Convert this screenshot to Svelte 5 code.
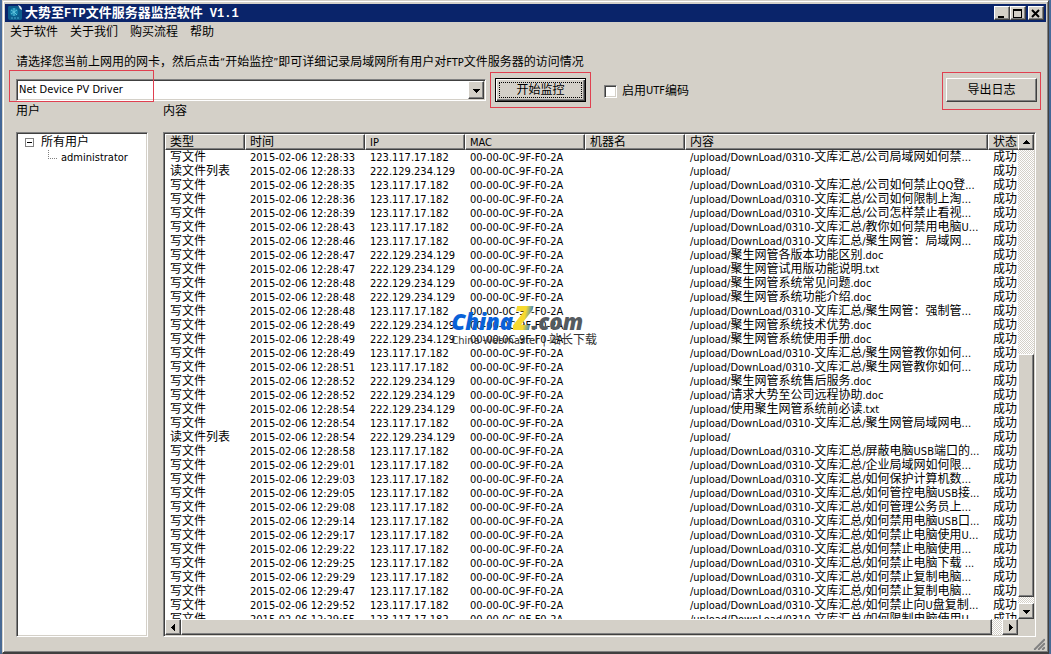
<script>
    let device = $state('Net Device PV Driver');
    let useUtf = $state(false);

    const menus = ['关于软件', '关于我们', '购买流程', '帮助'];
    const headers = ['类型', '时间', 'IP', 'MAC', '机器名', '内容', '状态'];
    const mac = '00-00-0C-9F-F0-2A';
    const inside = '123.117.17.182';
    const outside = '222.129.234.129';
    const folder = '/upload/DownLoad/0310-文库汇总/';

    // [time, ip, path]
    const log = [
        ['12:28:33', inside, folder + '公司局域网如何禁...'],
        ['12:28:33', outside, '/upload/'],
        ['12:28:35', inside, folder + '公司如何禁止QQ登...'],
        ['12:28:36', inside, folder + '公司如何限制上淘...'],
        ['12:28:39', inside, folder + '公司怎样禁止看视...'],
        ['12:28:43', inside, folder + '教你如何禁用电脑U...'],
        ['12:28:46', inside, folder + '聚生网管：局域网...'],
        ['12:28:47', outside, '/upload/聚生网管各版本功能区别.doc'],
        ['12:28:47', outside, '/upload/聚生网管试用版功能说明.txt'],
        ['12:28:48', outside, '/upload/聚生网管系统常见问题.doc'],
        ['12:28:48', outside, '/upload/聚生网管系统功能介绍.doc'],
        ['12:28:48', inside, folder + '聚生网管：强制管...'],
        ['12:28:49', outside, '/upload/聚生网管系统技术优势.doc'],
        ['12:28:49', outside, '/upload/聚生网管系统使用手册.doc'],
        ['12:28:49', inside, folder + '聚生网管教你如何...'],
        ['12:28:51', inside, folder + '聚生网管教你如何...'],
        ['12:28:52', outside, '/upload/聚生网管系统售后服务.doc'],
        ['12:28:52', outside, '/upload/请求大势至公司远程协助.doc'],
        ['12:28:54', outside, '/upload/使用聚生网管系统前必读.txt'],
        ['12:28:54', inside, folder + '聚生网管局域网电...'],
        ['12:28:54', outside, '/upload/'],
        ['12:28:58', inside, folder + '屏蔽电脑USB端口的...'],
        ['12:29:01', inside, folder + '企业局域网如何限...'],
        ['12:29:03', inside, folder + '如何保护计算机数...'],
        ['12:29:05', inside, folder + '如何管控电脑USB接...'],
        ['12:29:08', inside, folder + '如何管理公务员上...'],
        ['12:29:14', inside, folder + '如何禁用电脑USB口...'],
        ['12:29:17', inside, folder + '如何禁止电脑使用U...'],
        ['12:29:22', inside, folder + '如何禁止电脑使用...'],
        ['12:29:25', inside, folder + '如何禁止电脑下载 ...'],
        ['12:29:29', inside, folder + '如何禁止复制电脑...'],
        ['12:29:47', inside, folder + '如何禁止复制电脑...'],
        ['12:29:52', inside, folder + '如何禁止向U盘复制...'],
        ['12:29:55', inside, folder + '如何限制电脑使用U...'],
    ];

    // latin runs are set one size smaller than the chinese text
    function runs(text) {
        return text.match(/[\x20-\x7e“”]+|[^\x20-\x7e“”]+/g) ?? [];
    }
    function isLatin(run) {
        return /^[\x20-\x7e“”]/.test(run);
    }
</script>

{#snippet mixed(text)}{#each runs(text) as run}{#if isLatin(run)}<span class="latin">{run}</span>{:else}{run}{/if}{/each}{/snippet}

{#snippet arrow(points)}<svg width="7" height="7" viewBox="0 0 7 7" shape-rendering="crispEdges"><polygon {points} fill="#000" /></svg>{/snippet}

<div class="window">
    <header class="title-bar">
        <svg class="app-icon" width="16" height="16" viewBox="0 0 16 16">
            <path d="M2 1h9l4 4v8q0 2-2 2H3q-2 0-2-2V3q0-2 1-2z" fill="#0c5d8c" />
            <path d="M11 0q4 1 4 5l-2-1q-1-2-2-4z" fill="#e8f4fa" />
            <circle cx="7" cy="7" r="4" fill="#1583ad" />
            <path d="M4 5l3 2 3-2M4 9l3-2 3 3M7 3v8" stroke="#5ec3dc" fill="none" />
            <path d="M4 13h2M7 13h2M10 13h2" stroke="#49aed0" />
        </svg>
        <h1>大势至<span class="mono">FTP</span>文件服务器监控软件<span class="mono">{' V1.1'}</span></h1>
        <div class="window-buttons">
            <button aria-label="最小化"><svg width="10" height="9" shape-rendering="crispEdges"><path d="M1 7h6v2H1z" /></svg></button>
            <button aria-label="最大化"><svg width="10" height="9" shape-rendering="crispEdges"><path d="M0 0h9v9H0zM1 2v6h7V2z" fill-rule="evenodd" /></svg></button>
            <button class="close" aria-label="关闭"><svg width="10" height="9"><path d="M1 1l7 7M8 1L1 8" stroke="#000" stroke-width="2" /></svg></button>
        </div>
    </header>

    <nav class="menu">
        {#each menus as item}
            <button>{item}</button>
        {/each}
    </nav>

    <main>
        <label class="prompt" for="device">{@render mixed('请选择您当前上网用的网卡，然后点击“开始监控”即可详细记录局域网所有用户对FTP文件服务器的访问情况')}</label>

        <div class="toolbar">
            <div class="combo">
                <select id="device" bind:value={device}>
                    <option>Net Device PV Driver</option>
                </select>
                <span class="combo-arrow">{@render arrow('0,2 7,2 3.5,6')}</span>
                <span class="mark combo-mark"></span>
            </div>
            <div class="mark start-mark">
                <button class="push default"><span>开始监控</span></button>
            </div>
            <label class="check"><input type="checkbox" bind:checked={useUtf} />{@render mixed('启用UTF编码')}</label>
            <div class="mark export-mark">
                <button class="push">导出日志</button>
            </div>
        </div>

        <div class="panels">
            <section class="users">
                <h2>用户</h2>
                <div class="tree sunken">
                    <ul>
                        <li>
                            <button class="toggle" aria-label="折叠"></button>所有用户
                            <ul class="children">
                                <li>{@render mixed('administrator')}</li>
                            </ul>
                        </li>
                    </ul>
                </div>
            </section>

            <section class="content">
                <h2>内容</h2>
                <div class="list sunken">
                    <div class="rows">
                        <table>
                            <colgroup>
                                <col class="w80" /><col class="w120" /><col class="w100" /><col class="w120" /><col class="w100" /><col /><col class="w30" />
                            </colgroup>
                            <thead>
                                <tr>
                                    {#each headers as h}
                                        <th>{@render mixed(h)}</th>
                                    {/each}
                                </tr>
                            </thead>
                            <tbody>
                                {#each log as [time, ip, path]}
                                    <tr>
                                        <td>{path === '/upload/' ? '读文件列表' : '写文件'}</td>
                                        <td>{@render mixed('2015-02-06 ' + time)}</td>
                                        <td>{@render mixed(ip)}</td>
                                        <td>{@render mixed(mac)}</td>
                                        <td></td>
                                        <td>{@render mixed(path)}</td>
                                        <td>成功</td>
                                    </tr>
                                {/each}
                            </tbody>
                        </table>
                    </div>
                    <div class="scroll vertical">
                        <button aria-label="向上">{@render arrow('0,5 7,5 3.5,1')}</button>
                        <div class="before"></div>
                        <div class="thumb"></div>
                        <div class="after"></div>
                        <button aria-label="向下">{@render arrow('0,2 7,2 3.5,6')}</button>
                    </div>
                    <div class="scroll horizontal">
                        <button aria-label="向左">{@render arrow('5,0 5,7 1,3.5')}</button>
                        <div class="thumb"></div>
                        <div class="after"></div>
                        <button aria-label="向右">{@render arrow('2,0 2,7 6,3.5')}</button>
                    </div>
                    <div class="corner"></div>

                    <div class="watermark">
                        <div class="brand">China<span class="zed">Z</span><span class="com">.com</span></div>
                        <div class="slogan">{@render mixed('China Webmaster | 站长下载')}</div>
                    </div>
                </div>
            </section>
        </div>
    </main>

    <footer>
        <svg width="13" height="13" viewBox="0 0 13 13">
            <path d="M1 13L13 1M5 13l8-8M9 13l4-4" stroke="#fff" />
            <path d="M2 13L13 2M6 13l7-7M10 13l3-3" stroke="#808080" stroke-width="2" />
        </svg>
    </footer>
</div>

<style>
    :global(body){
        margin: 0;
        background: linear-gradient(#4a6c9c, #3a5f8f 40%, #496a94);
    }
    .window{
        box-sizing: border-box;
        height: 100vh;
        margin: 0 2px;
        padding: 1px 1px 0;
        display: flex;
        flex-direction: column;
        background-color: #d4d0c8;
        border: 1px solid #d4d0c8;
        border-right-color: #404040;
        border-bottom: 2px solid #404040;
        box-shadow: inset 1px 1px #fff, inset -1px -1px #808080;
        color: #000;
        font-family: "DejaVu Sans Condensed", "Noto Sans CJK SC", sans-serif;
        font-size: 12px;
        line-height: 14px;
    }
    .latin{
        font-size: 11px;
        line-height: 10px;
    }
    button, select{
        font: inherit;
        color: inherit;
        padding: 0;
        margin: 0;
        border: 0;
        border-radius: 0;
        background: none;
    }
    h1, h2, ul{
        margin: 0;
        padding: 0;
        font-size: 12px;
        font-weight: normal;
        list-style: none;
    }

    .title-bar{
        display: flex;
        align-items: center;
        height: 18px;
        margin: 2px 1px 0;
        padding: 0 2px;
        background-color: #0a246a;
        color: #fff;
    }
    .title-bar h1{
        flex: 1;
        margin-left: 2px;
        font-size: 13px;
        font-weight: bold;
        white-space: pre;
    }
    .mono{
        font-family: "Liberation Mono", monospace;
        font-size: 12px;
    }
    .window-buttons{
        display: flex;
    }
    .window-buttons button{
        width: 16px;
        height: 14px;
        display: flex;
        align-items: center;
        justify-content: center;
    }
    .window-buttons .close{
        margin-left: 2px;
    }
    .window-buttons button, .scroll button, .thumb, .combo-arrow{
        box-sizing: border-box;
        background-color: #d4d0c8;
        border: 1px solid;
        border-color: #fff #404040 #404040 #fff;
        box-shadow: inset -1px -1px #808080;
    }

    .menu{
        display: flex;
        gap: 12px;
        padding: 3px 6px;
    }

    main{
        flex: 1;
        min-height: 0;
        display: flex;
        flex-direction: column;
        padding: 13px 8px 0 12px;
    }
    .prompt{
        white-space: nowrap;
    }
    .toolbar{
        display: flex;
        align-items: flex-start;
        margin-top: 3px;
    }
    .mark{
        box-sizing: border-box;
        border: 1px solid #e04050;
    }
    .combo{
        position: relative;
        box-sizing: border-box;
        width: 470px;
        height: 22px;
        margin: 7px 4px 0 0;
        display: flex;
        padding: 1px;
        background-color: #fff;
        border: 1px solid;
        border-color: #808080 #fff #fff #808080;
        box-shadow: inset 1px 1px #404040, inset -1px -1px #d4d0c8;
    }
    .combo select{
        appearance: none;
        flex: 1;
        padding-left: 1px;
        font-size: 11px;
        outline: 0;
    }
    .combo-arrow{
        width: 16px;
        display: flex;
        align-items: center;
        justify-content: center;
        pointer-events: none;
    }
    .combo-mark{
        position: absolute;
        left: -8px;
        top: -10px;
        width: 145px;
        height: 32px;
        pointer-events: none;
    }
    .start-mark, .export-mark{
        padding: 5px 4px;
    }
    .push{
        box-sizing: border-box;
        display: block;
        width: 91px;
        height: 24px;
        padding: 2px;
        border: 1px solid;
        border-color: #fff #404040 #404040 #fff;
        box-shadow: inset -1px -1px #808080;
    }
    .default{
        border-color: #000;
        box-shadow: inset 1px 1px #fff, inset -1px -1px #404040, inset -2px -2px #808080;
    }
    .default span{
        display: block;
        margin: 0 1px;
        border: 1px dotted #000;
    }
    .check{
        display: flex;
        align-items: center;
        white-space: pre;
        margin: 12px 0 0 13px;
    }
    .check input{
        appearance: none;
        box-sizing: border-box;
        width: 13px;
        height: 13px;
        margin: 0 5px 0 0;
        background-color: #fff;
        border: 1px solid;
        border-color: #808080 #fff #fff #808080;
        box-shadow: inset 1px 1px #404040, inset -1px -1px #d4d0c8;
    }
    .check input:checked{
        background-color: #0a246a;
    }
    .export-mark{
        margin-left: auto;
        margin-right: -2px;
        padding: 5px 3px 7px;
    }

    .panels{
        flex: 1;
        min-height: 0;
        display: flex;
        gap: 15px;
        margin: -6px 0 0;
    }
    section{
        display: flex;
        flex-direction: column;
        min-height: 0;
    }
    section h2{
        margin-bottom: 14px;
    }
    .users{
        width: 132px;
    }
    .content{
        flex: 1;
        min-width: 0;
        margin-right: 3px;
    }
    .sunken{
        flex: 1;
        min-height: 0;
        box-sizing: border-box;
        padding: 1px;
        background-color: #fff;
        border: 1px solid;
        border-color: #808080 #fff #fff #808080;
        box-shadow: inset 1px 1px #404040, inset -1px -1px #d4d0c8;
    }
    .tree{
        padding: 1px 8px;
        line-height: 16px;
    }
    .toggle{
        box-sizing: border-box;
        width: 9px;
        height: 9px;
        margin-right: 7px;
        border: 1px solid #808080;
        background: linear-gradient(#000, #000) center / 5px 1px no-repeat;
    }
    .children li{
        display: flex;
        align-items: center;
        height: 16px;
        padding-left: 23px;
    }
    .children li::before{
        content: '';
        width: 8px;
        height: 8px;
        margin: 0 4px 8px 0;
        border-left: 1px dotted #808080;
        border-bottom: 1px dotted #808080;
    }

    .list{
        position: relative;
        display: grid;
        grid-template: minmax(0, 1fr) 16px / minmax(0, 1fr) 16px;
    }
    .rows{
        overflow: hidden;
    }
    table{
        width: 100%;
        table-layout: fixed;
        border-collapse: separate;
        border-spacing: 0;
    }
    .w30{ width: 30px; }
    .w80{ width: 80px; }
    .w100{ width: 100px; }
    .w120{ width: 120px; }
    th, td{
        padding: 0 0 0 5px;
        height: 14px;
        line-height: 14px;
        text-align: left;
        font-weight: normal;
        white-space: pre;
        overflow: hidden;
    }
    th{
        padding: 0 0 0 4px;
        background-color: #d4d0c8;
        border: 1px solid;
        border-color: #fff #404040 #404040 #fff;
        box-shadow: inset -1px -1px #808080;
    }
    th:last-child{
        border-right: 0;
        box-shadow: inset 0 -1px #808080;
    }

    .scroll{
        display: flex;
        background: repeating-conic-gradient(#fff 0 25%, #d4d0c8 0 50%) 0 0 / 2px 2px;
    }
    .scroll button{
        width: 16px;
        height: 16px;
        flex: none;
        display: flex;
        align-items: center;
        justify-content: center;
    }
    .vertical{
        flex-direction: column;
    }
    .vertical .before{ flex: 205; }
    .vertical .thumb{ flex: 242; }
    .vertical .after{ flex: 6; }
    .horizontal .thumb{ flex: 811; }
    .horizontal .after{ flex: 10; }
    .corner{
        background-color: #d4d0c8;
    }

    .watermark{
        position: absolute;
        left: 33%;
        top: 35%;
        white-space: nowrap;
        pointer-events: none;
    }
    .brand{
        font-family: "Open Sans", sans-serif;
        font-size: 22px;
        font-weight: 800;
        font-style: italic;
        line-height: 24px;
        color: #0a62d8;
    }
    .zed{
        margin-right: -4px;
        padding-right: 4px;
        font-size: 34px;
        line-height: 0;
        background: linear-gradient(100deg, #f7d92e 50%, #2c7fd0 75%);
        background-clip: text;
        color: transparent;
    }
    .com{
        color: #555b60;
    }
    .slogan{
        color: #333;
    }

    footer{
        display: flex;
        justify-content: flex-end;
        padding: 0 2px 2px;
    }
    footer svg{
        display: block;
    }
</style>
